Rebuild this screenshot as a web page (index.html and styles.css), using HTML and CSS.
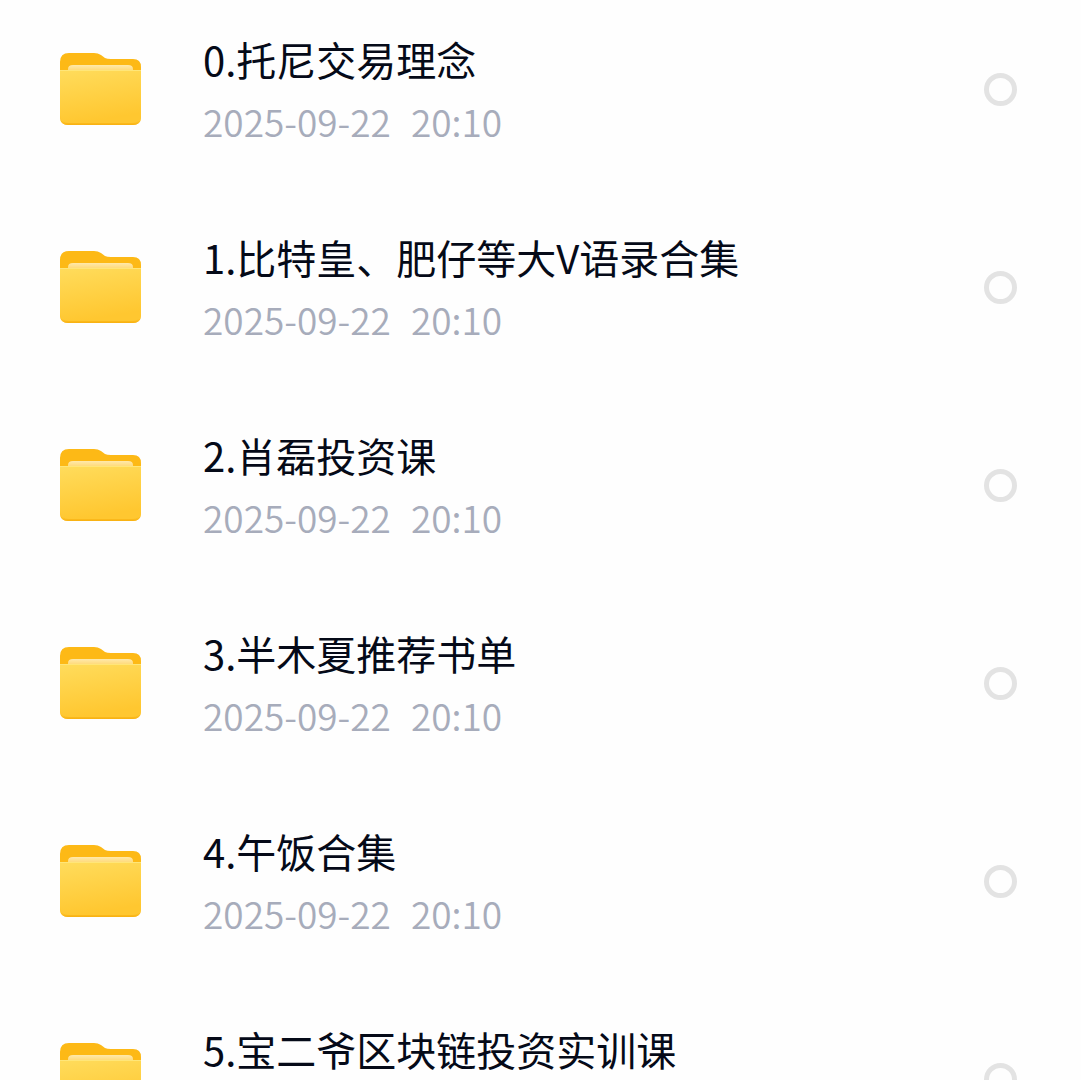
FILE: index.html
```html
<!DOCTYPE html>
<html lang="zh-CN">
<head>
<meta charset="utf-8">
<meta name="viewport" content="width=device-width, initial-scale=1">
<title>文件列表</title>
<link rel="stylesheet" href="styles.css">
</head>
<body>
<svg class="defs" width="0" height="0" aria-hidden="true">
  <defs>
    <linearGradient id="front" x1="0" y1="0" x2="0.25" y2="1">
      <stop offset="0" stop-color="#ffdc5c"/>
      <stop offset="1" stop-color="#ffc730"/>
    </linearGradient>
    <linearGradient id="rim" x1="0" y1="0" x2="0" y2="1">
      <stop offset="0.9" stop-color="#ffc730"/>
      <stop offset="1" stop-color="#f8b010"/>
    </linearGradient>
    <linearGradient id="paper" x1="0" y1="0" x2="0" y2="1">
      <stop offset="0" stop-color="#ffe9ac"/>
      <stop offset="1" stop-color="#ffd873"/>
    </linearGradient>
    <symbol id="folder" viewBox="0 0 84 74">
      <path fill="#fdb916" d="M1 10Q1 1 10 1H35Q39 1 42 3L46 6Q48 7 52 7H74Q82 7 82 15V65Q82 73 74 73H9Q1 73 1 65Z"/>
      <path fill="url(#paper)" d="M9 19V17Q9 13 14 13H69Q74 13 74 17V19Z"/>
      <path fill="url(#rim)" d="M1 30H82V64Q82 73 73 73H10Q1 73 1 64Z"/>
      <path fill="url(#front)" d="M1 18H82V62Q82 71 73 71H10Q1 71 1 62Z"/>
      <path fill="#ffe679" d="M1 18H82V19H1Z"/>
    </symbol>
  </defs>
</svg>
<ul class="files">
  <li><label class="file"><svg class="icon" aria-hidden="true"><use href="#folder"/></svg><span class="info"><span class="name">0.托尼交易理念</span><span class="date"><span>2025-09-22</span><span>20:10</span></span></span><input class="pick" type="radio" name="f0"></label></li>
  <li><label class="file"><svg class="icon" aria-hidden="true"><use href="#folder"/></svg><span class="info"><span class="name">1.比特皇、肥仔等大V语录合集</span><span class="date"><span>2025-09-22</span><span>20:10</span></span></span><input class="pick" type="radio" name="f1"></label></li>
  <li><label class="file"><svg class="icon" aria-hidden="true"><use href="#folder"/></svg><span class="info"><span class="name">2.肖磊投资课</span><span class="date"><span>2025-09-22</span><span>20:10</span></span></span><input class="pick" type="radio" name="f2"></label></li>
  <li><label class="file"><svg class="icon" aria-hidden="true"><use href="#folder"/></svg><span class="info"><span class="name">3.半木夏推荐书单</span><span class="date"><span>2025-09-22</span><span>20:10</span></span></span><input class="pick" type="radio" name="f3"></label></li>
  <li><label class="file"><svg class="icon" aria-hidden="true"><use href="#folder"/></svg><span class="info"><span class="name">4.午饭合集</span><span class="date"><span>2025-09-22</span><span>20:10</span></span></span><input class="pick" type="radio" name="f4"></label></li>
  <li><label class="file"><svg class="icon" aria-hidden="true"><use href="#folder"/></svg><span class="info"><span class="name">5.宝二爷区块链投资实训课</span><span class="date"><span>2025-09-22</span><span>20:10</span></span></span><input class="pick" type="radio" name="f5"></label></li>
</ul>
</body>
</html>
```
FILE: styles.css
```css
body {
  margin: 0;
  background: #fefefe;
  color: #050a18;
  font-family: "Noto Sans CJK SC", sans-serif;
}

.defs {
  position: absolute;
}

.files {
  display: flex;
  flex-direction: column;
  gap: 74px;
  margin: 0;
  padding: 27px 64px 27px 59px;
  list-style: none;
}

.file {
  display: flex;
  align-items: center;
}

.icon {
  flex: none;
  width: 84px;
  height: 74px;
  margin-right: 60px;
}

.info {
  flex: 1;
  min-width: 0;
}

.name,
.date {
  display: flex;
}

.name {
  font-size: 40px;
  line-height: 64px;
}

.date {
  gap: 20px;
  color: #a7acbb;
  font-size: 37px;
  font-weight: 350;
  line-height: 60px;
}

.pick {
  flex: none;
  box-sizing: border-box;
  width: 33px;
  height: 33px;
  margin: 0;
  border: 5px solid #e3e3e3;
  border-radius: 50%;
  appearance: none;
}

.pick:checked {
  border-color: #fdb916;
}
```
